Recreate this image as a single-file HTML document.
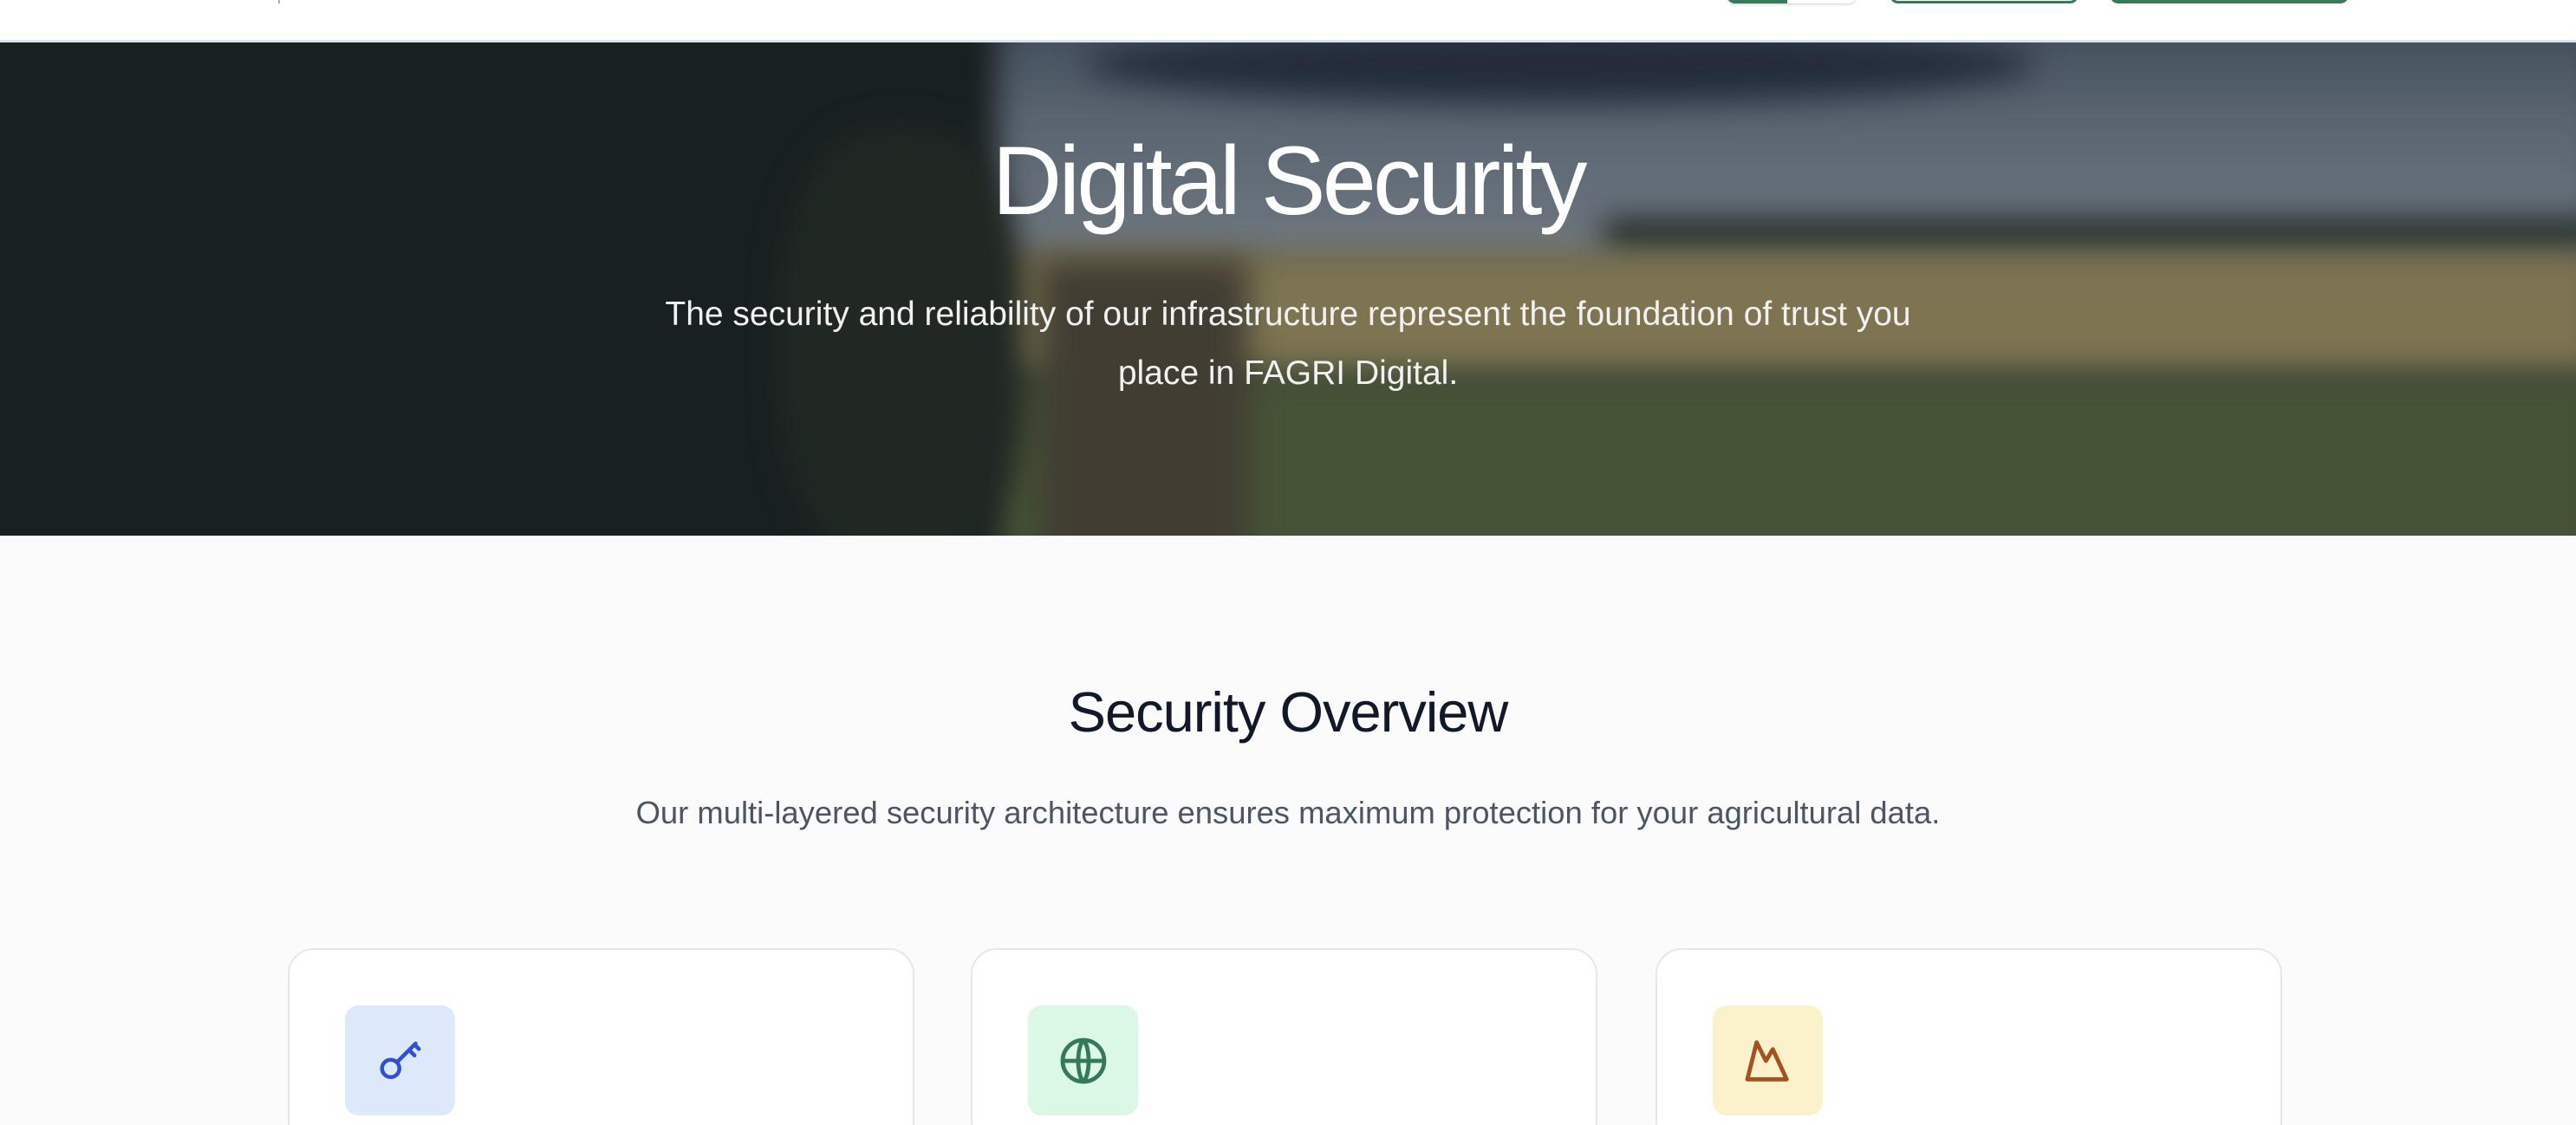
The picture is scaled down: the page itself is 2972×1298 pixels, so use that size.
<!DOCTYPE html>
<html><head><meta charset="utf-8"><style>
*{margin:0;padding:0;box-sizing:border-box}
html,body{width:2972px;height:1298px;overflow:hidden}
body{background:#fbfbfc;font-family:"Liberation Sans",sans-serif;position:relative}
.hdr{position:absolute;left:0;top:0;width:2972px;height:49px;background:#fff;border-bottom:3px solid #dde3ea}
.btn{position:absolute;top:-20px;height:24px;border-radius:10px}
.hero{position:absolute;left:0;top:49px;width:2972px;height:569px;overflow:hidden;background:#2a3138}
.hero div{position:absolute}
.blur{filter:blur(18px)}
h1{position:absolute;left:0;width:2972px;text-align:center;color:#fff;font-weight:normal;font-size:112px;letter-spacing:-4px;line-height:140px}
.sub{position:absolute;left:0;width:2972px;text-align:center;color:#f1f1f1;font-size:39px;line-height:68px}
h2{position:absolute;left:0;width:2972px;top:784px;text-align:center;font-weight:normal;font-size:65px;color:#111827;letter-spacing:-1px}
.p2{position:absolute;left:0;width:2972px;top:917px;text-align:center;font-size:36.4px;color:#4b5563}
.card{position:absolute;top:1094px;width:723px;height:230px;background:#fff;border:2px solid #e3e7ee;border-radius:30px}
.ic{position:absolute;left:64px;top:64px;width:127px;height:127px;border-radius:16px;display:flex;align-items:center;justify-content:center}
</style></head><body>
<div class="hdr">
 <div style="position:absolute;left:321px;top:0;width:2px;height:4px;background:#aaa"></div>
 <div class="btn" style="left:1992px;width:150px;background:#fff;box-shadow:0 1px 3px rgba(0,0,0,.2)"></div>
 <div class="btn" style="left:1992px;width:70px;background:#3a7a5a;border-radius:10px 0 0 10px"></div>
 <div class="btn" style="left:2180px;width:218px;border:3px solid #3a7a5a;background:#fff"></div>
 <div class="btn" style="left:2434px;width:276px;background:#3a7a5a"></div>
</div>
<div class="hero">
 <div class="blur" style="left:1100px;top:-40px;width:1900px;height:300px;background:linear-gradient(180deg,#4a5664 0%,#6c7884 40%,#8a939a 100%)"></div>
 <div class="blur" style="left:1250px;top:-20px;width:1100px;height:90px;background:#2a3342;border-radius:50%"></div>
 <div class="blur" style="left:1850px;top:205px;width:1150px;height:40px;background:#1d2a20"></div>
 <div class="blur" style="left:1000px;top:240px;width:2000px;height:150px;background:#9a8d5e"></div>
 <div class="blur" style="left:1000px;top:380px;width:2000px;height:220px;background:#55633c"></div>
 <div class="blur" style="left:1200px;top:250px;width:240px;height:350px;background:#4e4838"></div>
 <div class="blur" style="left:-50px;top:-50px;width:1200px;height:700px;background:#1b2320"></div>
 <div class="blur" style="left:900px;top:100px;width:280px;height:500px;background:#262e24;border-radius:40%"></div>
 <div style="left:0;top:0;width:2972px;height:569px;background:rgba(15,20,35,.2)"></div>
 <h1 style="top:90px">Digital Security</h1>
 <div class="sub" style="top:280px">The security and reliability of our infrastructure represent the foundation of trust you<br>place in FAGRI Digital.</div>
</div>
<h2>Security Overview</h2>
<div class="p2">Our multi-layered security architecture ensures maximum protection for your agricultural data.</div>
<div class="card" style="left:332px"><div class="ic" style="background:#dde8fb">
<svg width="60" height="60" viewBox="0 0 24 24" fill="none" stroke="#2f4fd6" stroke-width="1.8" stroke-linecap="round"><circle cx="7.5" cy="15.5" r="4"/><path d="M10.5 12.5L19 4M16 7l2.5 2.5M18.5 4.5l2 2"/></svg></div></div>
<div class="card" style="left:1120px"><div class="ic" style="background:#dbf7e6">
<svg width="64" height="64" viewBox="0 0 24 24" fill="none" stroke="#357a58" stroke-width="1.8"><circle cx="12" cy="12" r="9"/><path d="M3 12h18M12 3c3 3 3 15 0 18M12 3c-3 3-3 15 0 18"/></svg></div></div>
<div class="card" style="left:1910px"><div class="ic" style="background:#fbf2cc">
<svg width="64" height="64" viewBox="0 0 24 24" fill="none" stroke="#a1521e" stroke-width="1.8" stroke-linejoin="round"><path d="M3 20L7 4l4 8 3-5 6 13z"/></svg></div></div>
</body></html>
